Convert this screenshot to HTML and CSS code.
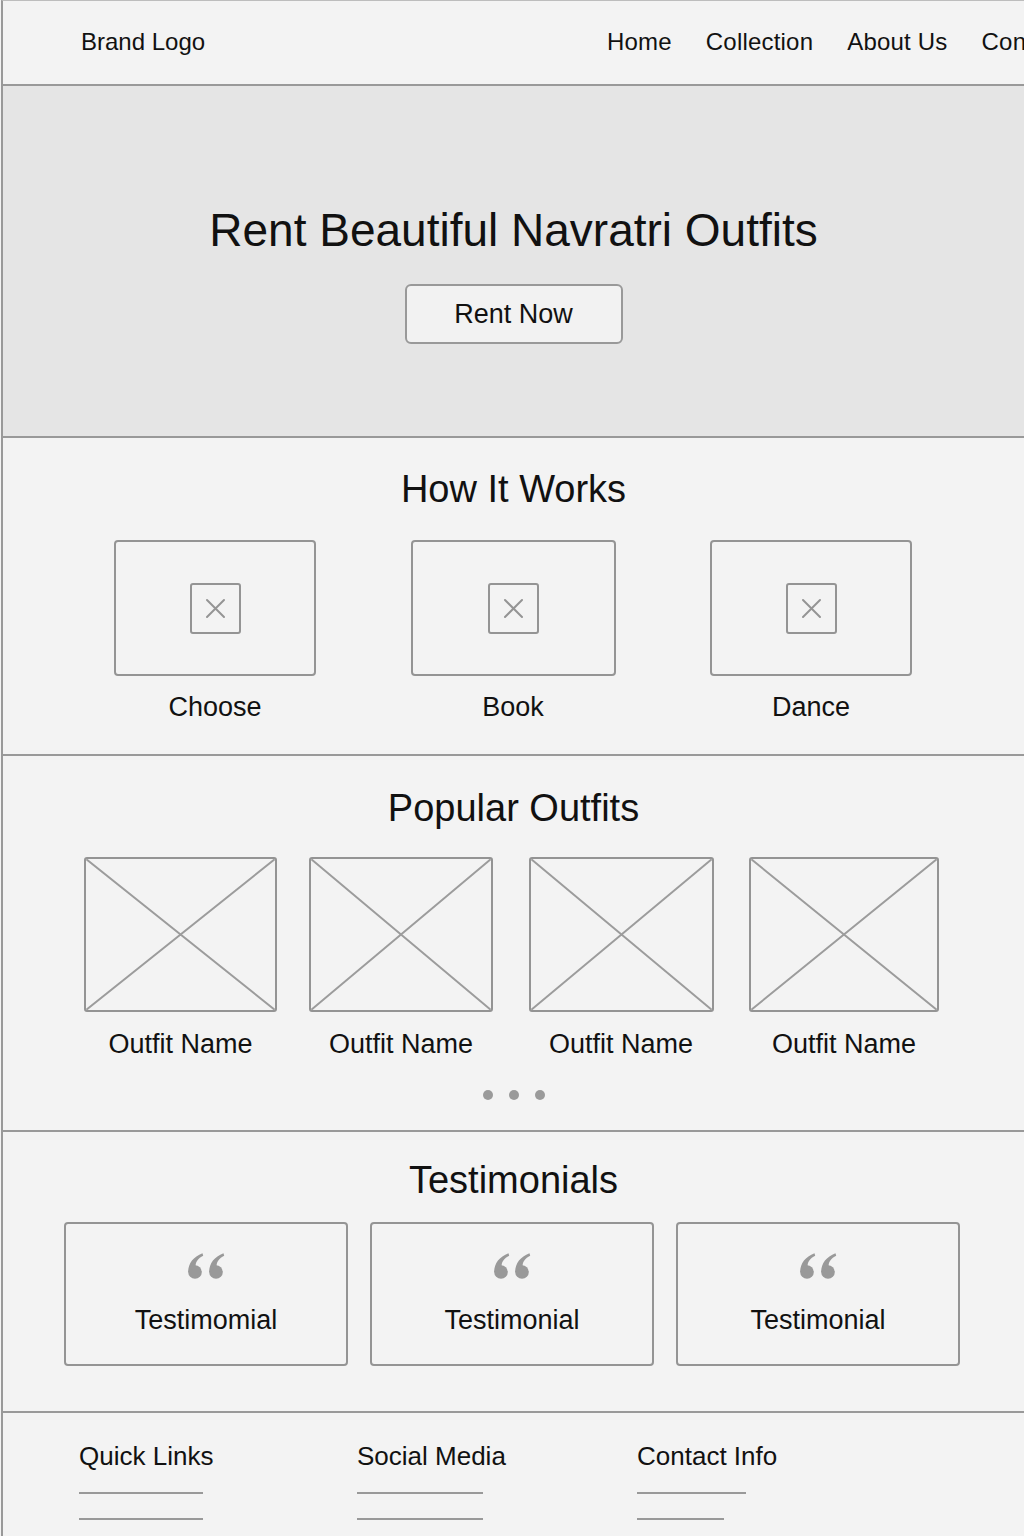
FILE: index.html
```html
<!DOCTYPE html>
<html lang="en">
<head>
<meta charset="utf-8">
<title>Navratri Outfit Rental</title>
<link rel="stylesheet" href="styles.css">
</head>
<body>
<div class="page">
  <header class="header">
    <div class="brand">Brand Logo</div>
    <nav class="nav">
      <a>Home</a>
      <a>Collection</a>
      <a>About Us</a>
      <a>Contact</a>
    </nav>
  </header>

  <section class="hero">
    <h1 class="hero-title">Rent Beautiful Navratri Outfits</h1>
    <button class="btn">Rent Now</button>
  </section>

  <section class="how">
    <h2 class="section-title">How It Works</h2>
    <div class="steps">
      <div class="step">
        <div class="step-box">
          <svg class="step-icon" width="51" height="51" viewBox="0 0 51 51"><rect x="1" y="1" width="49" height="49" rx="2" fill="none" stroke="#949494" stroke-width="2"/><path d="M17 17 L34 34 M34 17 L17 34" stroke="#949494" stroke-width="2" stroke-linecap="round"/></svg>
        </div>
        <div class="label">Choose</div>
      </div>
      <div class="step">
        <div class="step-box wide">
          <svg class="step-icon" width="51" height="51" viewBox="0 0 51 51"><rect x="1" y="1" width="49" height="49" rx="2" fill="none" stroke="#949494" stroke-width="2"/><path d="M17 17 L34 34 M34 17 L17 34" stroke="#949494" stroke-width="2" stroke-linecap="round"/></svg>
        </div>
        <div class="label">Book</div>
      </div>
      <div class="step">
        <div class="step-box">
          <svg class="step-icon" width="51" height="51" viewBox="0 0 51 51"><rect x="1" y="1" width="49" height="49" rx="2" fill="none" stroke="#949494" stroke-width="2"/><path d="M17 17 L34 34 M34 17 L17 34" stroke="#949494" stroke-width="2" stroke-linecap="round"/></svg>
        </div>
        <div class="label">Dance</div>
      </div>
    </div>
  </section>

  <section class="popular">
    <h2 class="section-title">Popular Outfits</h2>
    <div class="outfits">
      <div class="outfit">
        <svg class="ph ph1" viewBox="0 0 100 100" preserveAspectRatio="none"><path d="M0 0 L100 100 M100 0 L0 100" stroke="#9c9c9c" stroke-width="2" vector-effect="non-scaling-stroke"/></svg>
        <div class="label">Outfit Name</div>
      </div>
      <div class="outfit">
        <svg class="ph ph2" viewBox="0 0 100 100" preserveAspectRatio="none"><path d="M0 0 L100 100 M100 0 L0 100" stroke="#9c9c9c" stroke-width="2" vector-effect="non-scaling-stroke"/></svg>
        <div class="label">Outfit Name</div>
      </div>
      <div class="outfit">
        <svg class="ph ph3" viewBox="0 0 100 100" preserveAspectRatio="none"><path d="M0 0 L100 100 M100 0 L0 100" stroke="#9c9c9c" stroke-width="2" vector-effect="non-scaling-stroke"/></svg>
        <div class="label">Outfit Name</div>
      </div>
      <div class="outfit">
        <svg class="ph ph4" viewBox="0 0 100 100" preserveAspectRatio="none"><path d="M0 0 L100 100 M100 0 L0 100" stroke="#9c9c9c" stroke-width="2" vector-effect="non-scaling-stroke"/></svg>
        <div class="label">Outfit Name</div>
      </div>
    </div>
    <div class="dots"><span></span><span></span><span></span></div>
  </section>

  <section class="testimonials">
    <h2 class="section-title">Testimonials</h2>
    <div class="cards">
      <div class="card">
        <svg class="quote" width="38" height="26" viewBox="0 0 38 26"><g fill="#999"><circle cx="8" cy="19" r="6.8"/><path d="M1.3 19.5 C0.8 11 6 4 15.5 0.3 L16.2 2.8 C10.8 5.5 8.3 9.5 8.7 13 Z"/><circle cx="29" cy="19" r="6.8"/><path d="M22.3 19.5 C21.8 11 27 4 36.5 0.3 L37.2 2.8 C31.8 5.5 29.3 9.5 29.7 13 Z"/></g></svg>
        <div class="label">Testimomial</div>
      </div>
      <div class="card">
        <svg class="quote" width="38" height="26" viewBox="0 0 38 26"><g fill="#999"><circle cx="8" cy="19" r="6.8"/><path d="M1.3 19.5 C0.8 11 6 4 15.5 0.3 L16.2 2.8 C10.8 5.5 8.3 9.5 8.7 13 Z"/><circle cx="29" cy="19" r="6.8"/><path d="M22.3 19.5 C21.8 11 27 4 36.5 0.3 L37.2 2.8 C31.8 5.5 29.3 9.5 29.7 13 Z"/></g></svg>
        <div class="label">Testimonial</div>
      </div>
      <div class="card">
        <svg class="quote" width="38" height="26" viewBox="0 0 38 26"><g fill="#999"><circle cx="8" cy="19" r="6.8"/><path d="M1.3 19.5 C0.8 11 6 4 15.5 0.3 L16.2 2.8 C10.8 5.5 8.3 9.5 8.7 13 Z"/><circle cx="29" cy="19" r="6.8"/><path d="M22.3 19.5 C21.8 11 27 4 36.5 0.3 L37.2 2.8 C31.8 5.5 29.3 9.5 29.7 13 Z"/></g></svg>
        <div class="label">Testimonial</div>
      </div>
    </div>
  </section>

  <footer class="footer">
    <div class="fcol">
      <div class="fhead">Quick Links</div>
      <div class="fline w124"></div>
      <div class="fline w124"></div>
    </div>
    <div class="fcol">
      <div class="fhead">Social Media</div>
      <div class="fline w126"></div>
      <div class="fline w126"></div>
    </div>
    <div class="fcol">
      <div class="fhead">Contact Info</div>
      <div class="fline w109"></div>
      <div class="fline w87"></div>
    </div>
  </footer>
</div>
</body>
</html>
```

FILE: styles.css
```css
* { box-sizing: border-box; }

html, body {
  margin: 0;
  padding: 0;
  background: #f3f3f3;
  overflow-x: hidden;
}

body {
  font-family: "Liberation Sans", Arial, sans-serif;
  color: #111;
}

.page {
  margin-left: 1px;
  border-left: 2px solid #999;
  border-top: 1px solid #bdbdbd;
  min-height: 1535px;
  background: #f3f3f3;
}

/* Header */
.header {
  height: 85px;
  border-bottom: 2px solid #999;
  display: flex;
  align-items: center;
  padding-left: 78px;
  padding-bottom: 1px;
  overflow: hidden;
  white-space: nowrap;
  font-size: 24px;
}

.brand {
  flex: 0 0 526px;
}

.nav {
  display: flex;
  gap: 34px;
  flex: none;
  letter-spacing: 0.2px;
}

.nav a {
  color: #111;
  text-decoration: none;
}

/* Hero */
.hero {
  height: 352px;
  background: #e5e5e5;
  border-bottom: 2px solid #999;
  display: flex;
  flex-direction: column;
  align-items: center;
  padding-top: 117px;
}

.hero-title {
  margin: 0 0 26px;
  font-size: 46px;
  font-weight: 400;
  line-height: 55px;
}

.btn {
  width: 218px;
  height: 60px;
  border: 2px solid #999;
  border-radius: 6px;
  background: #f2f2f2;
  font-family: inherit;
  font-size: 27px;
  color: #111;
  padding: 0;
}

/* Generic */
.section-title {
  margin: 0;
  text-align: center;
  font-size: 38px;
  font-weight: 400;
  line-height: 46px;
}

.label {
  font-size: 27px;
  line-height: 32px;
  text-align: center;
  white-space: nowrap;
}

/* How it works */
.how {
  border-bottom: 2px solid #999;
  padding: 28px 0 31px;
}

.how .section-title { margin-bottom: 28px; }

.steps {
  display: grid;
  grid-template-columns: repeat(3, 298px);
  margin-left: 63px;
}

.step {
  display: flex;
  flex-direction: column;
  align-items: center;
  gap: 15px;
}

.step-box {
  width: 202px;
  height: 136px;
  border: 2px solid #949494;
  border-radius: 4px;
  display: flex;
  align-items: center;
  justify-content: center;
}

.step-box.wide { width: 205px; }

.step-icon { display: block; }

/* Popular outfits */
.popular {
  border-bottom: 2px solid #999;
  padding: 29px 0 30px;
}

.popular .section-title { margin-bottom: 26px; }

.outfits {
  display: grid;
  grid-template-columns: 225px 216px 224px 222px;
  margin-left: 65px;
}

.outfit {
  display: flex;
  flex-direction: column;
  align-items: center;
  gap: 16px;
}

.ph {
  display: block;
  width: 188px;
  height: 155px;
  border: 2px solid #949494;
  border-radius: 3px;
}

.ph1 { width: 193px; }
.ph2 { width: 184px; }
.ph3 { width: 185px; }
.ph4 { width: 190px; }

.dots {
  display: flex;
  justify-content: center;
  gap: 16px;
  margin-top: 30px;
}

.dots span {
  width: 10px;
  height: 10px;
  border-radius: 50%;
  background: #9a9a9a;
}

/* Testimonials */
.testimonials {
  border-bottom: 2px solid #999;
  padding: 25px 0 45px;
}

.testimonials .section-title { margin-bottom: 19px; }

.cards {
  display: grid;
  grid-template-columns: repeat(3, 284px);
  gap: 22px;
  margin-left: 61px;
}

.card {
  height: 144px;
  border: 2px solid #949494;
  border-radius: 4px;
  display: flex;
  flex-direction: column;
  align-items: center;
  justify-content: center;
  gap: 25px;
}

.quote { display: block; }

/* Footer */
.footer {
  display: grid;
  grid-template-columns: 278px 280px auto;
  padding: 28px 0 16px 76px;
}

.fhead {
  font-size: 26px;
  line-height: 30px;
  margin-bottom: 21px;
  white-space: nowrap;
}

.fline {
  height: 2px;
  background: #999;
  margin-bottom: 24px;
}

.w124 { width: 124px; }
.w126 { width: 126px; }
.w109 { width: 109px; }
.w87 { width: 87px; }
```
